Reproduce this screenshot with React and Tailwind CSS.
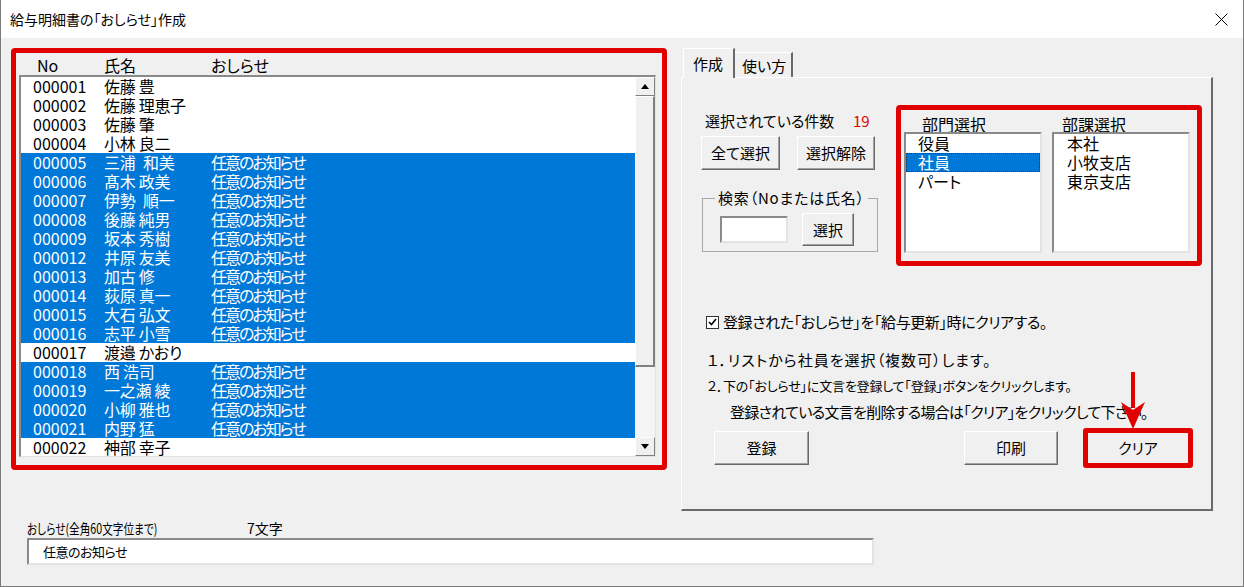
import React from "react";

const rows = [
  ["000001", "佐藤 豊", false],
  ["000002", "佐藤 理恵子", false],
  ["000003", "佐藤 肇", false],
  ["000004", "小林 良二", false],
  ["000005", "三浦\u2002和美", true],
  ["000006", "髙木 政美", true],
  ["000007", "伊勢\u2002順一", true],
  ["000008", "後藤 純男", true],
  ["000009", "坂本 秀樹", true],
  ["000012", "井原 友美", true],
  ["000013", "加古 修", true],
  ["000014", "荻原 真一", true],
  ["000015", "大石 弘文", true],
  ["000016", "志平 小雪", true],
  ["000017", "渡邉 かおり", false],
  ["000018", "西 浩司", true],
  ["000019", "一之瀬 綾", true],
  ["000020", "小柳 雅也", true],
  ["000021", "内野 猛", true],
  ["000022", "神部 幸子", false],
];

const btn =
  "bg-[#f0f0f0] border border-t-white border-l-white border-r-[#696969] border-b-[#696969] shadow-[inset_-1px_-1px_0_#a0a0a0] flex items-center justify-center text-[15px] leading-[20px]";

const sunken =
  "bg-white border-2 border-t-[#8a8a8a] border-l-[#8a8a8a] border-r-[#e3e3e3] border-b-[#e3e3e3]";

function Tri({ down }) {
  return (
    <svg width="8" height="5" viewBox="0 0 8 5">
      {down ? <polygon points="0,0 8,0 4,5" fill="#000" /> : <polygon points="0,5 8,5 4,0" fill="#000" />}
    </svg>
  );
}

function ScrollBtn({ down }) {
  return (
    <div className="h-[19px] w-full bg-[#f0f0f0] border border-t-white border-l-white border-r-[#808080] border-b-[#808080] flex items-center justify-center">
      <Tri down={down} />
    </div>
  );
}

export default function App() {
  return (
    <div className="w-[1244px] h-[587px] bg-[#f0f0f0] flex flex-col border-x border-b border-[#7a7a7a] overflow-hidden text-black font-['Noto_Sans_CJK_JP','Noto_Sans',sans-serif] [font-feature-settings:'palt']">
      {/* Title bar */}
      <div className="h-[38px] shrink-0 bg-white flex items-center pl-[9px]">
        <span className="text-[14px] leading-[20px]">給与明細書の「おしらせ」作成</span>
        <svg className="ml-auto mr-[15px]" width="13" height="13" viewBox="0 0 13 13">
          <path d="M0.5 0.5 L12.5 12.5 M12.5 0.5 L0.5 12.5" stroke="#000" strokeWidth="1" />
        </svg>
      </div>

      {/* Body */}
      <div className="flex pt-[9px] shrink-0">
        {/* Left red box */}
        <div className="ml-[10px] mt-[1px] w-[656px] h-[422px] border-[5px] border-[#e00000] rounded-[4px] pl-[3px] shrink-0">
          <div className="h-[22px] flex items-end pl-[18px] text-[16px] leading-[19px]">
            <span className="w-[67px]">No</span>
            <span className="w-[107px]">氏名</span>
            <span>おしらせ</span>
          </div>
          <div className="w-[637px] h-[382px] flex bg-white border-t-2 border-l-2 border-r border-b border-t-[#8a8a8a] border-l-[#8a8a8a] border-r-[#e3e3e3] border-b-[#e3e3e3]">
            <div className="w-[614px] overflow-hidden">
              {rows.map(([no, name, sel]) => (
                <div
                  key={no}
                  className={
                    "h-[19px] flex pl-[12px] text-[16px] leading-[19px] whitespace-nowrap " +
                    (sel ? "bg-[#0078d7] text-white" : "bg-white text-black")
                  }
                >
                  <span className="w-[71px]">{no}</span>
                  <span className="w-[107px] tracking-[-0.3px]">{name}</span>
                  <span className="tracking-[-2px]">{sel ? "任意のお知らせ" : ""}</span>
                </div>
              ))}
            </div>
            <div className="w-[20px] flex flex-col">
              <ScrollBtn />
              <div className="h-[271px] bg-[#f0f0f0] border border-t-white border-l-white border-r-[#808080] border-b-[#808080] border-r-2 border-b-2"></div>
              <div className="flex-1 bg-[#f5f5f5]"></div>
              <ScrollBtn down />
            </div>
          </div>
        </div>

        {/* Right tab control */}
        <div className="ml-[14px] w-[532px] flex flex-col shrink-0">
          <div className="h-[30px] flex items-end pl-[2px]">
            <div className="w-[52px] h-[30px] -mb-px relative z-10 bg-[#f0f0f0] border-t border-l border-t-white border-l-white border-r-2 border-r-[#696969] pl-[9px] pt-[5px] text-[15px] leading-[20px]">
              作成
            </div>
            <div className="w-[58px] h-[25px] bg-[#f0f0f0] border-t border-t-white border-r-2 border-r-[#696969] pl-[7px] pt-[3px] text-[15px] leading-[20px]">
              使い方
            </div>
          </div>
          <div className="h-[434px] relative border-t border-l border-t-white border-l-white border-r-2 border-b-2 border-r-[#6a6a6a] border-b-[#6a6a6a] pl-[18px]">
            {/* top section */}
            <div className="flex items-start">
              <div className="w-[178px] flex flex-col">
                <div className="mt-[33px] h-[19px] flex text-[15px] leading-[19px]">
                  <span className="w-[153px] pl-[5px]">選択されている件数</span>
                  <span className="text-[#e00000]">19</span>
                </div>
                <div className="mt-[6px] h-[34px] flex">
                  <div className={btn + " ml-[1px] w-[79px] h-[34px]"}>全て選択</div>
                  <div className={btn + " ml-[17px] w-[78px] h-[34px]"}>選択解除</div>
                </div>
                <fieldset className="mt-[18px] ml-[2px] w-[176px] border border-[#a8a8a8] pb-[5px]">
                  <legend className="ml-[12px] px-[3px] text-[15px] leading-[20px] tracking-[0.8px]">検索（Noまたは氏名）</legend>
                  <div className="mt-[5px] flex items-center">
                    <div className={sunken + " ml-[17px] w-[68px] h-[27px]"}></div>
                    <div className={btn + " ml-[14px] w-[52px] h-[33px]"}>選択</div>
                  </div>
                </fieldset>
              </div>

              <div className="ml-[18px] mt-[27px] w-[306px] h-[161px] border-[5px] border-[#e00000] rounded-[4px] flex flex-col">
                <div className="h-[22px] flex items-end text-[16px] leading-[16px]">
                  <span className="ml-[3px] w-[138px] pl-[18px]">部門選択</span>
                  <span className="ml-[10px] w-[138px] pl-[10px]">部課選択</span>
                </div>
                <div className="flex">
                  <div className={sunken + " ml-[3px] w-[138px] h-[121px] text-[16px] leading-[19px]"}>
                    <div className="h-[19px] pl-[12px]">役員</div>
                    <div className="h-[19px] pl-[11px] bg-[#0078d7] text-white border border-dotted border-[#333] leading-[17px]">社員</div>
                    <div className="h-[19px] pl-[12px]">パート</div>
                  </div>
                  <div className={sunken + " ml-[10px] w-[138px] h-[121px] text-[16px] leading-[19px]"}>
                    <div className="h-[19px] pl-[13px]">本社</div>
                    <div className="h-[19px] pl-[13px]">小牧支店</div>
                    <div className="h-[19px] pl-[13px]">東京支店</div>
                  </div>
                </div>
              </div>
            </div>

            {/* checkbox */}
            <div className="mt-[46px] h-[20px] flex items-center">
              <div className="ml-[6px] w-[13px] h-[13px] bg-white border border-[#333] flex items-center justify-center">
                <svg width="9" height="8" viewBox="0 0 9 8">
                  <polyline points="1,4 3.5,6.5 8,1" fill="none" stroke="#000" strokeWidth="1.6" />
                </svg>
              </div>
              <span className="ml-[4px] text-[15px] leading-[20px] whitespace-nowrap tracking-[-0.4px]">
                登録された「おしらせ」を「給与更新」時にクリアする。
              </span>
            </div>
            <div className="mt-[18px] ml-[7px] text-[15px] leading-[19px] whitespace-nowrap tracking-[1px]">
              １．リストから社員を選択（複数可）します。
            </div>
            <div className="mt-[7px] ml-[7px] text-[13px] leading-[19px] whitespace-nowrap tracking-[-0.2px]">
              ２．下の「おしらせ」に文言を登録して「登録」ボタンをクリックします。
            </div>
            <div className="mt-[7px] ml-[30px] text-[15px] leading-[19px] whitespace-nowrap tracking-[-0.7px]">
              登録されている文言を削除する場合は「クリア」をクリックして下さい。
            </div>
            <div className="mt-[7px] h-[40px] flex items-center">
              <div className={btn + " ml-[14px] w-[95px] h-[34px]"}>登録</div>
              <div className={btn + " ml-[155px] w-[94px] h-[34px]"}>印刷</div>
              <div className="ml-[25px] w-[110px] h-[40px] border-[5px] border-[#e00000] rounded-[3px] flex items-center justify-center bg-[#f0f0f0] text-[15px] leading-[20px]">
                クリア
              </div>
            </div>

            {/* arrow overlay */}
            <svg className="absolute left-[438px] top-[294px]" width="26" height="58" viewBox="0 0 26 58">
              <rect x="11" y="0" width="4" height="36" fill="#e00000" />
              <polygon points="13,57 1,30 13,38 25,30" fill="#e00000" />
            </svg>
          </div>
        </div>
      </div>

      {/* Bottom */}
      <div className="pl-[26px] mt-[4px] flex flex-col">
        <div className="h-[22px] flex items-start">
          <div className="w-[220px]">
            <span className="inline-block origin-left scale-x-[0.76] text-[14px] leading-[18px] whitespace-nowrap">
              おしらせ(全角60文字位まで)
            </span>
          </div>
          <span className="mt-[4px] text-[14px] leading-[18px]">7文字</span>
        </div>
        <div className={sunken + " mt-[1px] w-[847px] h-[27px] pl-[14px] flex items-center text-[13px] leading-[18px]"}>
          <span className="tracking-[-0.5px]">任意のお知らせ</span>
        </div>
      </div>
    </div>
  );
}
